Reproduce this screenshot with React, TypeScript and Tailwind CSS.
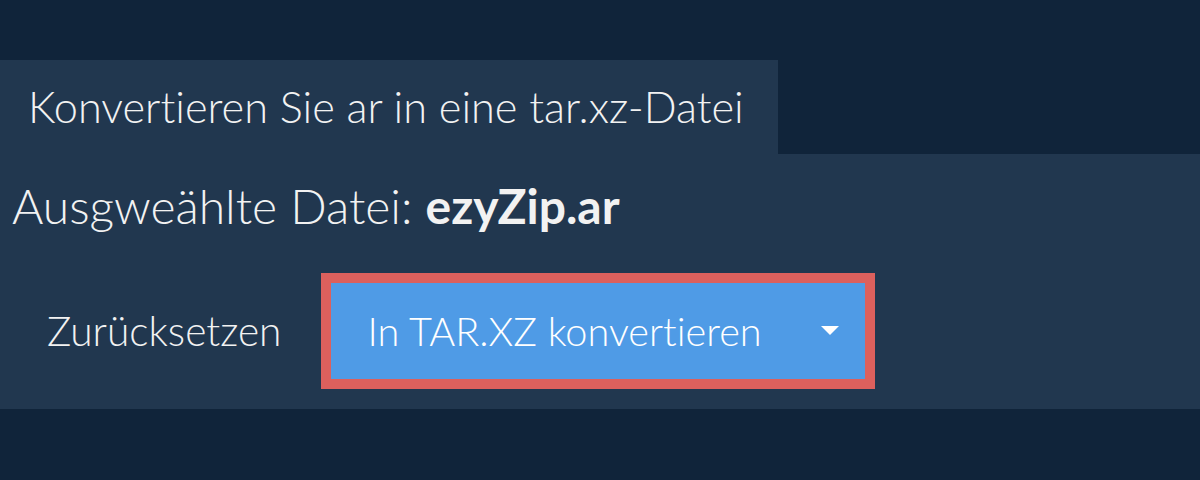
import { useState } from 'react';

export default function App() {
  const [open, setOpen] = useState(false);
  return (
    <div className="w-[1200px] h-[480px] bg-[#10243a] pt-[60px] font-['Lato','Liberation_Sans',sans-serif] [font-variant-ligatures:none] text-[#f2f2f2] overflow-hidden">
      <div className="w-[778px] h-[94px] bg-[#21374f] flex items-center pl-[28px]">
        <h2 className="text-[43.3px] font-light leading-none">Konvertieren Sie ar in eine tar.xz-Datei</h2>
      </div>
      <div className="h-[255px] bg-[#21374f] flex flex-col">
        <p className="text-[48px] font-light leading-none pl-[12px] pt-[28px]">
          Ausgweählte Datei: <span className="font-bold">ezyZip.ar</span>
        </p>
        <div className="flex items-center mt-[43px]">
          <button className="text-[40.7px] font-light leading-none ml-[47px] mr-[40px]">Zurücksetzen</button>
          <div className="border-[10px] border-[#dc605d]">
            <button
              onClick={() => setOpen(!open)}
              className="w-[534px] h-[96px] bg-[#4f9be6] flex items-center pl-[36px] pr-[26px] text-[39.7px] font-light leading-none text-white"
            >
              <span className="flex-1 text-left">In TAR.XZ konvertieren</span>
              <svg width="18" height="10" viewBox="0 0 18 10" fill="#fff">
                <path d="M0 0h18L9 9z" />
              </svg>
            </button>
          </div>
        </div>
      </div>
    </div>
  );
}
